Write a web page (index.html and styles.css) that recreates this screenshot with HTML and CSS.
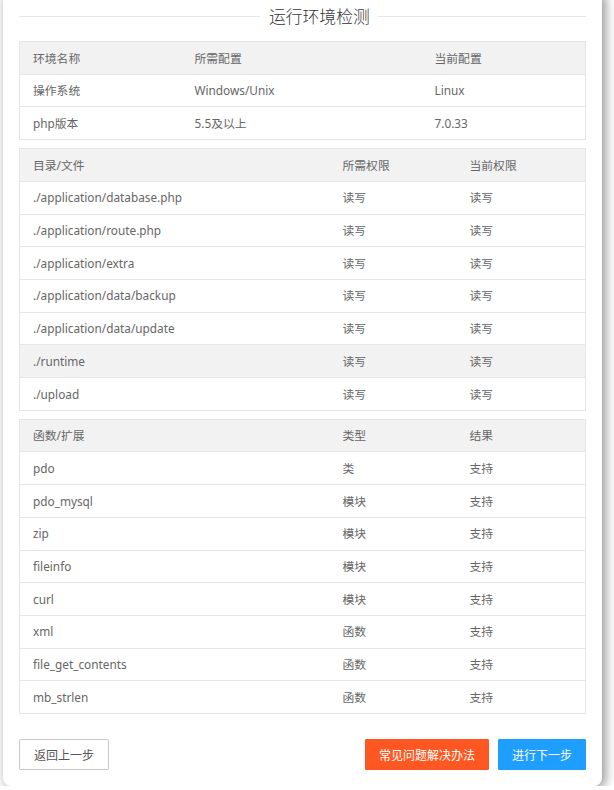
FILE: index.html
```html
<!DOCTYPE html>
<html lang="zh-CN">
<head>
<meta charset="utf-8">
<title>运行环境检测</title>
<link rel="stylesheet" href="styles.css">
</head>
<body>
<div class="card">
  <div class="legend">
    <span class="legend-line legend-line-left"></span>
    <span class="legend-text">运行环境检测</span>
    <span class="legend-line legend-line-right"></span>
  </div>

  <table class="grid grid-env">
    <colgroup><col class="c-env1"><col class="c-env2"><col></colgroup>
    <thead>
      <tr><th>环境名称</th><th>所需配置</th><th>当前配置</th></tr>
    </thead>
    <tbody>
      <tr><td>操作系统</td><td>Windows/Unix</td><td>Linux</td></tr>
      <tr><td>php版本</td><td>5.5及以上</td><td>7.0.33</td></tr>
    </tbody>
  </table>

  <table class="grid">
    <colgroup><col class="c-a"><col class="c-b"><col></colgroup>
    <thead>
      <tr><th>目录/文件</th><th>所需权限</th><th>当前权限</th></tr>
    </thead>
    <tbody>
      <tr><td>./application/database.php</td><td>读写</td><td>读写</td></tr>
      <tr><td>./application/route.php</td><td>读写</td><td>读写</td></tr>
      <tr><td>./application/extra</td><td>读写</td><td>读写</td></tr>
      <tr><td>./application/data/backup</td><td>读写</td><td>读写</td></tr>
      <tr><td>./application/data/update</td><td>读写</td><td>读写</td></tr>
      <tr class="is-hover"><td>./runtime</td><td>读写</td><td>读写</td></tr>
      <tr><td>./upload</td><td>读写</td><td>读写</td></tr>
    </tbody>
  </table>

  <table class="grid">
    <colgroup><col class="c-a"><col class="c-b"><col></colgroup>
    <thead>
      <tr><th>函数/扩展</th><th>类型</th><th>结果</th></tr>
    </thead>
    <tbody>
      <tr><td>pdo</td><td>类</td><td>支持</td></tr>
      <tr><td>pdo_mysql</td><td>模块</td><td>支持</td></tr>
      <tr><td>zip</td><td>模块</td><td>支持</td></tr>
      <tr><td>fileinfo</td><td>模块</td><td>支持</td></tr>
      <tr><td>curl</td><td>模块</td><td>支持</td></tr>
      <tr><td>xml</td><td>函数</td><td>支持</td></tr>
      <tr><td>file_get_contents</td><td>函数</td><td>支持</td></tr>
      <tr><td>mb_strlen</td><td>函数</td><td>支持</td></tr>
    </tbody>
  </table>

  <div class="actions">
    <a class="btn btn-plain" href="#">返回上一步</a>
    <div class="actions-right">
      <a class="btn btn-warm" href="#">常见问题解决办法</a>
      <a class="btn btn-blue" href="#">进行下一步</a>
    </div>
  </div>
</div>
</body>
</html>
```

FILE: styles.css
```css
html, body {
  margin: 0;
  padding: 0;
  background: #fff;
}

body {
  font-family: "Noto Sans", "Noto Sans CJK SC", sans-serif;
  color: #666;
  overflow: hidden;
}

.card {
  box-sizing: border-box;
  width: 599px;
  margin: -8px 0 0 3px;
  padding: 12px 16px 16px;
  background: #fff;
  border-radius: 0 0 8px 8px;
  box-shadow: 3px 2px 12px rgba(0, 0, 0, 0.45);
}

.legend {
  display: flex;
  align-items: center;
  height: 24px;
}

.legend-line {
  height: 1px;
  background: #e6e6e6;
}

.legend-line-left {
  width: 241px;
}

.legend-line-right {
  flex: 1;
}

.legend-text {
  padding: 0 8px 0 9px;
  font-family: "Noto Sans CJK SC", sans-serif;
  font-size: 16.8px;
  font-weight: 300;
  color: #333;
  line-height: 24px;
}

.grid {
  width: 100%;
  table-layout: fixed;
  border-collapse: collapse;
  font-size: 11.8px;
  line-height: 16.7px;
  color: #666;
  margin-top: 8px;
}

.grid-env {
  margin-top: 13px;
}

.c-env1 { width: 162px; }
.c-env2 { width: 240px; }
.c-a { width: 310px; }
.c-b { width: 127px; }

.grid th,
.grid td {
  padding: 7.5px 13px;
  border: 1px solid #e6e6e6;
  text-align: left;
  font-weight: 400;
  white-space: nowrap;
}

.grid th + th,
.grid td + td {
  border-left: none;
}

.grid th:not(:last-child),
.grid td:not(:last-child) {
  border-right: none;
}

.grid thead tr,
.grid tr.is-hover {
  background: #f2f2f2;
}

.actions {
  display: flex;
  justify-content: space-between;
  align-items: center;
  margin-top: 25px;
}

.actions-right {
  display: flex;
  gap: 9px;
}

.btn {
  display: inline-block;
  box-sizing: border-box;
  height: 31px;
  line-height: 29px;
  padding: 0 13px;
  border: 1px solid transparent;
  font-family: "Noto Sans CJK SC", sans-serif;
  font-size: 12px;
  text-decoration: none;
  border-radius: 1px;
  white-space: nowrap;
}

.btn-plain {
  padding: 0 14px;
  background: #fff;
  border-color: #c9c9c9;
  color: #555;
}

.btn-warm {
  background: #ff5722;
  border-color: #ff5722;
  color: #fff;
}

.btn-blue {
  background: #1e9fff;
  border-color: #1e9fff;
  color: #fff;
}
```
